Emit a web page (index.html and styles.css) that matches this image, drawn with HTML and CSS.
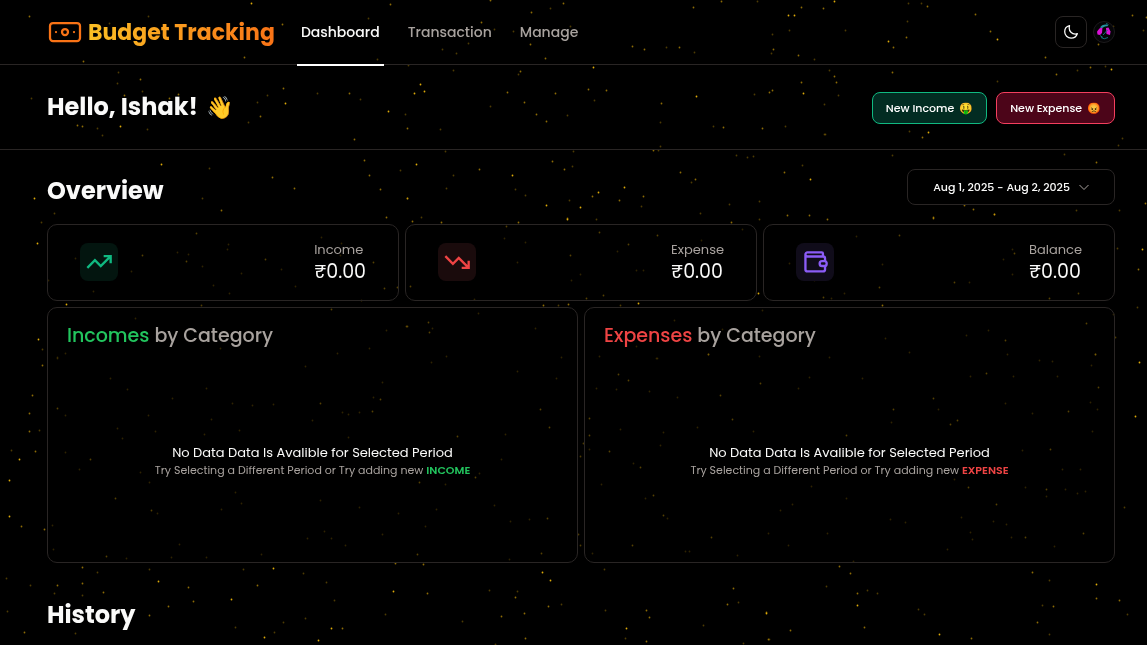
FILE: index.html
```html
<!DOCTYPE html>
<html lang="en">
<head>
<meta charset="utf-8">
<meta name="viewport" content="width=device-width, initial-scale=1">
<title>Budget Tracking</title>
<link rel="stylesheet" href="styles.css">
</head>
<body>
<canvas class="stars" id="stars" aria-hidden="true"></canvas>

<header class="topbar">
  <a class="brand" href="#">
    <svg class="brand-icon" viewBox="0 0 24 24" aria-hidden="true"><rect x="2" y="6" width="20" height="12" rx="2"/><circle cx="12" cy="12" r="2"/><path d="M6 12h.01M18 12h.01"/></svg>
    <span class="brand-name">Budget Tracking</span>
  </a>
  <nav class="nav">
    <a class="nav-link nav-link-active" href="#">Dashboard</a>
    <a class="nav-link" href="#">Transaction</a>
    <a class="nav-link" href="#">Manage</a>
  </nav>
  <div class="tools">
    <button class="theme-button" type="button" aria-label="Toggle theme">
      <svg viewBox="0 0 15 15" aria-hidden="true"><path d="M6.1 1.6C3.5 2.2 1.6 4.500 1.600 7.300c0 3.300 2.700 6 6 6 2.700 0 5-1.800 5.800-4.200-.6.2-1.200.3-1.900.3-3.200 0-5.700-2.600-5.700-5.700 0-.7.1-1.400.3-2.100Z"/></svg>
    </button>
    <button class="avatar" type="button" aria-label="Account">
      <svg viewBox="0 0 22 22" aria-hidden="true">
        <circle cx="11" cy="11" r="10.500" fill="#050507" stroke="#1c1a1c"/>
        <path d="M6.500 7.500 9.500 6 9 12 7 14 4.500 13.500 4 10.500Z" fill="#d911d6"/>
        <path d="M13 7 15.500 6.500 17.500 10.500 17 14 13.500 13Z" fill="#d911d6"/>
        <path d="M7 6.500Q9 3 14 3.500L15.500 5 12 5.500 9 7Z" fill="#2492a0"/>
        <path d="M13 2.500 15.500 3.500M8 16.500Q11 19 15 16.500M10 14 14.500 9M7 14.500l3 2" stroke="#156e78" fill="none"/>
      </svg>
    </button>
  </div>
</header>

<section class="greeting">
  <h1 class="title greeting-title">Hello, Ishak! <span>👋</span></h1>
  <div class="actions">
    <button class="action action-income" type="button">New Income <span>🤑</span></button>
    <button class="action action-expense" type="button">New Expense <span>😡</span></button>
  </div>
</section>

<main class="content">
  <div class="overview-head">
    <h2 class="title">Overview</h2>
    <button class="range" type="button">Aug 1, 2025 - Aug 2, 2025
      <svg viewBox="0 0 12 12" aria-hidden="true"><path d="M1.500 4 6 8.500 10.500 4"/></svg>
    </button>
  </div>

  <div class="stats">
    <article class="card stat">
      <span class="tile tile-income"><svg viewBox="0 0 24 24" aria-hidden="true"><path d="M2 17 8.500 10.500 13.500 15.500 22 7M16 7h6v6"/></svg></span>
      <div><p class="stat-label">Income</p><p class="stat-value">₹0.00</p></div>
    </article>
    <article class="card stat">
      <span class="tile tile-expense"><svg viewBox="0 0 24 24" aria-hidden="true"><path d="M2 7 8.500 13.500 13.500 8.500 22 17M16 17h6v-6"/></svg></span>
      <div><p class="stat-label">Expense</p><p class="stat-value">₹0.00</p></div>
    </article>
    <article class="card stat">
      <span class="tile tile-balance"><svg viewBox="0 0 24 24" aria-hidden="true"><path d="M18.800 7.300V4.800a1 1 0 0 0-1-1H5.500A1.700 1.700 0 0 0 3.800 5.500v12.900a1.700 1.700 0 0 0 1.700 1.700h13.400a1.700 1.700 0 0 0 1.700-1.700v-3M3.800 5.600a1.700 1.700 0 0 0 1.700 1.700h13.400A1.700 1.700 0 0 1 20.600 9v2.300"/><rect x="16" y="11.300" width="6" height="4.100" rx="2"/></svg></span>
      <div><p class="stat-label">Balance</p><p class="stat-value">₹0.00</p></div>
    </article>
  </div>

  <div class="categories">
    <article class="card category">
      <h3 class="category-title"><span class="income">Incomes</span> by Category</h3>
      <div class="empty">
        <p class="empty-title">No Data Data Is Avalible for Selected Period</p>
        <p class="empty-hint">Try Selecting a Different Period or Try adding new <b class="income">INCOME</b></p>
      </div>
    </article>
    <article class="card category">
      <h3 class="category-title"><span class="expense">Expenses</span> by Category</h3>
      <div class="empty">
        <p class="empty-title">No Data Data Is Avalible for Selected Period</p>
        <p class="empty-hint">Try Selecting a Different Period or Try adding new <b class="expense">EXPENSE</b></p>
      </div>
    </article>
  </div>

  <h2 class="title history-title">History</h2>
</main>
<script src="stars.js"></script>
</body>
</html>
```
FILE: styles.css
```css
* {
  box-sizing: border-box;
  margin: 0;
}

body {
  --line: #292524;
  --muted: #a8a29e;
  --gutter-left: 47px;
  --gutter-right: 32px;
  background: #000;
  color: #fafaf9;
  font-family: Poppins, Inter, sans-serif;
  font-size: 13px;
  line-height: 20px;
}

button {
  font: inherit;
  color: inherit;
  cursor: pointer;
}

a {
  color: inherit;
  text-decoration: none;
}

.stars {
  position: fixed;
  inset: 0;
  z-index: -1;
}

.title {
  font-size: 24px;
  font-weight: 700;
  line-height: 36px;
}

.greeting-title span {
  margin-left: 3px;
  font-size: 22px;
}

.topbar {
  display: flex;
  align-items: center;
  height: 65px;
  padding: 0 var(--gutter-right) 0 var(--gutter-left);
  border-bottom: 1px solid var(--line);
}

.brand {
  display: flex;
  align-items: center;
  gap: 5px;
}

.brand-icon {
  width: 36px;
  height: 36px;
  fill: none;
  stroke: #f97316;
  stroke-width: 1.5;
  stroke-linecap: round;
}

.brand-name {
  padding-top: 2px;
  font-size: 22px;
  font-weight: 700;
  line-height: 32px;
  color: transparent;
  background: linear-gradient(to right, #fbbf24, #f97316);
  background-clip: text;
  -webkit-background-clip: text;
}

.nav {
  display: flex;
  gap: 20px;
  height: 65px;
  margin-left: 22px;
}

.nav-link {
  display: flex;
  align-items: center;
  height: 66px;
  padding: 1px 4px 0;
  border-bottom: 2px solid transparent;
  color: var(--muted);
  font-size: 14px;
  font-weight: 500;
}

.nav-link-active {
  color: #fafaf9;
  border-color: #fff;
}

.tools {
  display: flex;
  align-items: center;
  gap: 6px;
  margin-left: auto;
}

.theme-button {
  display: grid;
  place-items: center;
  width: 32px;
  height: 32px;
  padding: 0;
  background: #000;
  border: 1px solid var(--line);
  border-radius: 8px;
}

.theme-button svg {
  width: 16px;
  height: 16px;
  fill: none;
  stroke: #fafaf9;
  stroke-width: 1.2;
  stroke-linejoin: round;
}

.avatar {
  display: grid;
  width: 22px;
  height: 22px;
  padding: 0;
  background: none;
  border: 0;
  border-radius: 50%;
}

.greeting {
  display: flex;
  align-items: center;
  justify-content: space-between;
  padding: 24px var(--gutter-right) 23px var(--gutter-left);
  border-bottom: 1px solid var(--line);
}

.actions {
  display: flex;
  gap: 9px;
}

.action {
  height: 32px;
  padding: 0 13px;
  border: 1px solid;
  border-radius: 8px;
  font-size: 11px;
  font-weight: 500;
  color: #fff;
}

.action span {
  margin-left: 2px;
}

.action-income {
  background: #022c22;
  border-color: #10b981;
}

.action-expense {
  background: #4c0519;
  border-color: #f43f5e;
}

.content {
  padding: 19px var(--gutter-right) 13px var(--gutter-left);
}

.overview-head {
  display: flex;
  align-items: flex-start;
  justify-content: space-between;
  margin-bottom: 15px;
}

.overview-head .title {
  padding-top: 4px;
}

.range {
  display: flex;
  align-items: center;
  gap: 8px;
  height: 36px;
  padding: 0 24px 0 25px;
  background: #000;
  border: 1px solid var(--line);
  border-radius: 8px;
  font-size: 11px;
  font-weight: 500;
}

.range svg {
  width: 12px;
  height: 12px;
  fill: none;
  stroke: var(--muted);
}

.card {
  background: rgba(0, 0, 0, 0.4);
  border: 1px solid var(--line);
  border-radius: 10px;
}

.stats {
  display: grid;
  grid-template-columns: repeat(3, 1fr);
  gap: 6px;
}

.stat {
  display: flex;
  align-items: center;
  justify-content: space-between;
  padding: 15px 32px 16px;
}

.tile {
  display: grid;
  place-items: center;
  width: 38px;
  height: 38px;
  border-radius: 8px;
}

.tile svg {
  width: 28px;
  height: 28px;
  fill: none;
  stroke: currentColor;
  stroke-width: 2;
}

.tile-income {
  color: #10b981;
  background: #03150f;
}

.tile-expense {
  color: #ef4444;
  background: #1a0b0c;
}

.tile-balance {
  color: #8b5cf6;
  background: #100c1a;
}

.stat-label {
  color: var(--muted);
  line-height: 20px;
}

.stat-value {
  font-size: 19px;
  line-height: 24px;
}

.categories {
  display: grid;
  grid-template-columns: repeat(2, 1fr);
  gap: 6px;
  margin-top: 6px;
}

.category {
  padding: 12px 19px 20px;
}

.category-title {
  color: var(--muted);
  font-size: 19px;
  font-weight: 500;
  line-height: 32px;
}

.income {
  color: #22c55e;
}

.expense {
  color: #ef4444;
}

.empty {
  display: flex;
  flex-direction: column;
  align-items: center;
  justify-content: center;
  min-height: 190px;
  padding-top: 44px;
  padding-bottom: 16px;
}

.empty-title {
  line-height: 18px;
}

.empty-hint {
  color: var(--muted);
  font-size: 11px;
  line-height: 16px;
}

.empty-hint b {
  font-weight: 600;
}

.history-title {
  margin-top: 34px;
}
```
FILE: stars.js
```js
// Star positions, grouped by brightness.
const groups = [
  { alpha: 0.95, points: "251,3 120,126 285,103 388,111 420,84 424,91 414,93 696,96 593,67 888,41 997,39 1111,69 928,132 161,164 34,198 37,243 66,304 38,339 567,219 758,293 638,303 1142,249 19,459 9,480 9,516 158,581 273,568 231,599 393,591 542,572 550,580 626,628 766,613 1139,362 1135,416 857,605 939,634 1096,584 416,164 512,175 546,205 580,207 598,192 624,187 810,179 788,15 794,15 803,93 834,1 331,628 318,640 264,637" },
  { alpha: 0.6, points: "282,24 244,57 83,61 140,79 124,95 178,94 169,98 283,88 260,116 349,93 77,125 82,126 354,139 390,4 490,0 563,3 531,12 693,7 721,1 481,22 530,44 545,58 632,46 644,49 679,47 520,71 507,92 555,93 588,89 606,90 524,102 407,128 536,114 546,121 661,103 723,127 927,6 975,14 906,37 893,47 990,31 1045,57 1132,15 1146,17 1098,44 892,72 1056,74 1090,67 922,137 1096,162 964,205 973,209 994,214 933,218 1145,203 364,160 369,175 272,177 294,188 380,189 407,198 221,210 386,217 196,233 142,255 186,261 265,259 373,262 384,288 397,287 331,309 407,326 412,221 441,222 518,222 731,222 506,226 599,232 657,235 628,244 570,255 410,286 603,295 586,298 543,305 568,304 406,326 428,322 429,332 708,354 787,215 809,215 827,219 933,217 994,214 899,235 812,246 879,287 823,297 882,305 1014,253 954,282 1078,293 1049,298 1138,269 1086,323 1095,354 1005,340 42,365 32,395 29,413 57,408 29,431 35,451 90,459 115,498 151,510 21,526 44,529 106,556 320,403 380,399 372,411 82,567 82,583 103,592 188,587 168,606 149,615 24,632 193,601 57,585 257,585 342,628 540,409 549,427 457,436 475,477 419,482 547,518 541,553 417,554 395,563 423,564 708,354 618,374 628,380 720,395 760,383 589,418 589,435 609,451 640,467 653,495 663,515 711,537 632,545 732,419 427,593 515,597 548,606 501,616 524,613 525,638 646,610 649,617 646,641 733,588 727,604 768,639 1095,354 986,373 1098,387 933,398 893,409 957,420 950,424 1068,411 846,435 1050,449 968,487 1046,489 996,504 1025,537 1083,533 839,566 850,573 857,593 766,612 790,630 864,627 971,638 1032,572 1053,606 1096,598 1119,600 1037,622 479,169 407,198 552,161 564,169 567,218 592,196 619,200 643,196 680,172 695,179 784,172 801,7 823,8 773,49 798,55 834,76 836,82 801,82 772,90 769,92 762,128 29,16 653,150" },
  { alpha: 0.33, points: "148,16 109,23 368,18 377,59 118,72 142,91 117,83 31,98 267,95 317,93 248,122 97,128 147,129 102,135 257,102 360,99 550,8 494,29 513,31 570,26 442,49 456,53 468,43 666,47 694,52 408,65 453,70 518,74 594,100 405,114 440,129 490,106 567,115 660,122 713,126 908,3 921,3 907,21 1143,30 1113,26 997,81 1077,70 1105,66 909,131 1122,138 1118,145 892,155 1064,154 1076,210 1119,210 209,168 202,198 54,213 41,222 321,237 228,244 227,249 341,243 75,258 177,252 188,254 202,266 281,269 241,273 131,271 340,255 48,280 93,291 213,285 229,293 295,286 201,305 361,300 135,318 42,349 65,353 57,357 220,348 337,353 369,348 386,330 596,219 700,213 759,219 742,229 525,242 504,238 617,251 701,240 517,262 636,270 643,270 580,274 571,280 474,299 558,305 620,305 432,328 478,313 535,328 561,357 446,356 674,320 636,346 722,329 762,310 759,356 657,358 599,356 856,236 789,263 814,280 844,293 831,298 1012,249 1003,259 1012,274 969,282 882,264 1117,248 1137,307 1113,314 966,335 988,330 909,352 1007,354 829,357 885,338 1115,337 57,358 65,415 39,430 117,428 122,438 155,431 11,450 65,452 79,469 140,472 157,513 52,525 53,549 126,558 171,557 179,544 206,557 261,554 307,538 324,531 331,538 345,545 382,534 221,509 235,492 241,503 320,500 359,507 110,378 127,389 172,398 206,388 232,403 252,405 273,404 305,366 382,382 373,397 359,412 348,414 342,412 312,420 211,419 204,434 239,430 348,437 148,415 149,482 6,578 30,585 54,593 97,572 82,595 149,569 75,633 7,611 243,569 303,573 326,582 334,600 305,618 283,622 235,627 274,632 385,614 431,362 517,371 556,378 505,434 501,459 445,484 479,473 494,505 436,509 398,513 425,526 510,521 529,519 509,559 578,534 580,545 656,358 649,391 616,389 596,388 677,397 589,449 620,429 583,443 580,456 660,445 633,463 601,484 645,498 667,518 685,551 689,551 592,553 737,555 697,427 753,431 663,432 517,591 489,590 561,604 462,621 495,644 604,569 605,610 625,638 738,602 703,625 743,643 809,377 862,378 798,388 1039,360 1052,361 1091,365 1057,376 970,376 1013,376 938,409 891,422 1005,403 1032,413 1090,402 1097,409 1092,431 1022,450 1062,469 1080,469 954,479 1025,487 1046,496 1065,489 1077,493 1085,491 811,486 846,498 792,504 780,510 961,517 890,519 905,522 993,521 1006,524 970,532 972,539 1011,537 1054,546 947,549 788,545 768,533 827,533 1124,507 853,561 867,590 877,593 918,609 924,614 826,586 769,639 1049,580 1042,605 1049,634 1127,614 400,170 445,151 453,175 446,188 421,217 515,189 525,195 572,166 573,151 569,200 641,206 660,146 658,150 691,182 729,204 736,155 747,157 753,156 759,201 802,165 824,134 757,1 845,30 789,30 772,34 771,53 814,59 829,70 754,94 838,95 824,104 785,126 825,134" }
];

const canvas = document.getElementById("stars");

function drawStars() {
  canvas.width = window.innerWidth;
  canvas.height = window.innerHeight;
  const ctx = canvas.getContext("2d");
  ctx.fillStyle = "#eab308";
  for (const group of groups) {
    ctx.globalAlpha = group.alpha;
    for (const point of group.points.split(" ")) {
      const [x, y] = point.split(",").map(Number);
      ctx.beginPath();
      ctx.arc(x + 0.5, y + 0.5, 0.9, 0, Math.PI * 2);
      ctx.fill();
    }
  }
}

window.addEventListener("resize", drawStars);
drawStars();
```
